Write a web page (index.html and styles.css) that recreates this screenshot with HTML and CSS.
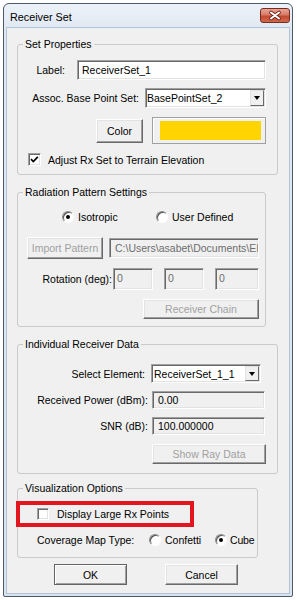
FILE: index.html
```html
<!DOCTYPE html>
<html>
<head>
<meta charset="utf-8">
<title>Receiver Set</title>
<link rel="stylesheet" href="styles.css">
</head>
<body>
<div class="window">
  <div class="titlebar">
    <span class="title">Receiver Set</span>
    <div class="close">
      <svg width="28" height="13" viewBox="0 0 28 13">
        <path d="M10 3.5 L18 9.5 M18 3.5 L10 9.5" stroke="#6b2116" stroke-width="3.6" stroke-linecap="round"/>
        <path d="M10 3.5 L18 9.5 M18 3.5 L10 9.5" stroke="#ffffff" stroke-width="2" stroke-linecap="round"/>
      </svg>
    </div>
  </div>
  <div class="client">
    <fieldset class="group g1">
      <legend>Set Properties</legend>
      <div class="row r1">
        <span class="lbl w47">Label:</span>
        <div class="edit e-label">ReceiverSet_1</div>
      </div>
      <div class="row r2">
        <span class="lbl w121">Assoc. Base Point Set:</span>
        <div class="combo c-base"><span class="val">BasePointSet_2</span><span class="arrow"><i></i></span></div>
      </div>
      <div class="row r3">
        <div class="btn b-color">Color</div>
        <div class="swatch"><span class="fill"></span></div>
      </div>
      <div class="row r4">
        <span class="chk chk-adjust"><svg width="11" height="11" viewBox="0 0 11 11"><path d="M2 5.2 L4.3 7.6 L8.8 2.8" fill="none" stroke="#000" stroke-width="1.7"/></svg></span>
        <span class="chk-text">Adjust Rx Set to Terrain Elevation</span>
      </div>
    </fieldset>

    <fieldset class="group g2">
      <legend>Radiation Pattern Settings</legend>
      <div class="row rr">
        <span class="opt opt-iso"><span class="radio on"><i></i></span><span class="opt-text">Isotropic</span></span>
        <span class="opt"><span class="radio"></span><span class="opt-text">User Defined</span></span>
      </div>
      <div class="row ri">
        <div class="btn disabled b-import">Import Pattern</div>
        <div class="edit disabled e-path">C:\Users\asabet\Documents\EI</div>
      </div>
      <div class="row rrot">
        <span class="lbl w95">Rotation (deg):</span>
        <div class="edit disabled e-rot1">0</div>
        <div class="edit disabled e-rot2">0</div>
        <div class="edit disabled e-rot3">0</div>
      </div>
      <div class="row rc">
        <div class="btn disabled b-chain">Receiver Chain</div>
      </div>
    </fieldset>

    <fieldset class="group g3">
      <legend>Individual Receiver Data</legend>
      <div class="row rs">
        <span class="lbl w127">Select Element:</span>
        <div class="combo c-elem"><span class="val">ReceiverSet_1_1</span><span class="arrow"><i></i></span></div>
      </div>
      <div class="row rp">
        <span class="lbl w130">Received Power (dBm):</span>
        <div class="edit readonly e-val">0.00</div>
      </div>
      <div class="row rp">
        <span class="lbl w130">SNR (dB):</span>
        <div class="edit readonly e-val">100.000000</div>
      </div>
      <div class="row rray">
        <div class="btn disabled b-ray">Show Ray Data</div>
      </div>
    </fieldset>

    <fieldset class="group g4">
      <legend>Visualization Options</legend>
      <div class="row highlight">
        <span class="chk chk-large"></span>
        <span class="chk-text large-text">Display Large Rx Points</span>
      </div>
      <div class="row rcov">
        <span class="cov-lbl">Coverage Map Type:</span>
        <span class="opt opt-conf"><span class="radio"></span><span class="opt-text">Confetti</span></span>
        <span class="opt opt-cube"><span class="radio on"><i></i></span><span class="opt-text">Cube</span></span>
      </div>
    </fieldset>

    <div class="row actions">
      <div class="btn default b-ok">OK</div>
      <div class="btn b-cancel">Cancel</div>
    </div>
  </div>
</div>
</body>
</html>
```

FILE: styles.css
```css
* { box-sizing: border-box; }
html, body { margin: 0; padding: 0; background: #ffffff; }
body {
  font-family: "Liberation Sans", Arial, sans-serif;
  font-size: 10.5px;
  color: #000;
}

.window {
  margin: 3px 0 0 3px;
  width: 290px;
  height: 594px;
  border: 1px solid #4f5866;
  border-radius: 6px 6px 2px 2px;
  background: linear-gradient(#edf2f8, #e0e9f3 24px, #d8e3f0);
  padding: 0 3px 3px 3px;
  display: flex;
  flex-direction: column;
}

.titlebar {
  height: 24px;
  display: flex;
  align-items: flex-start;
}
.title {
  margin-left: 3px;
  line-height: 24px;
  padding-top: 1px;
  font-size: 10.8px;
  color: #000;
}
.close {
  margin-left: auto;
  margin-right: -1px;
  margin-top: 4px;
  width: 30px;
  height: 15px;
  border: 1px solid #7a2a1d;
  border-radius: 3px;
  background: linear-gradient(#e8a696, #d87a66 45%, #c44a30 55%, #cf6a4d);
  display: flex;
  align-items: center;
  justify-content: center;
}
.close svg { display: block; }

.client {
  height: 565px;
  background: #f0f0f0;
  box-shadow: 0 0 0 1px #b3c4d9;
  padding: 10px 0 0 10px;
  display: flex;
  flex-direction: column;
  align-items: flex-start;
}

.group {
  margin: 0;
  padding: 0;
  border: 1px solid #cacaca;
  border-radius: 3px;
  min-inline-size: 0;
}
.group legend {
  margin-left: 5px;
  padding: 0 2px;
  line-height: 13px;
  font-size: 10.5px;
}

.row {
  display: flex;
  align-items: center;
  white-space: nowrap;
}

.lbl { text-align: right; }
.w47 { width: 47px; }
.w121 { width: 121px; }
.w95 { width: 95px; }
.w127 { width: 127px; }
.w130 { width: 130px; }

/* sunken edit */
.edit, .combo {
  background: #fff;
  border: 1px solid;
  border-color: #a0a0a0 #ffffff #ffffff #a0a0a0;
  box-shadow: inset 1px 1px 0 #696969, inset -1px -1px 0 #e3e3e3;
  display: flex;
  align-items: center;
  overflow: hidden;
  white-space: nowrap;
}
.edit { padding-left: 4px; }
.edit.disabled { background: #f0f0f0; color: #6d6d6d; }
.edit.readonly { background: #f0f0f0; color: #000; }

.combo .val { flex: 1; padding-left: 2px; }
.combo .arrow {
  width: 14px;
  height: calc(100% - 2px);
  margin-right: 1px;
  background: #f0f0f0;
  border: 1px solid;
  border-color: #e3e3e3 #696969 #696969 #e3e3e3;
  display: flex;
  align-items: center;
  justify-content: center;
}
.combo .arrow i {
  display: block;
  width: 0;
  height: 0;
  border-top: 4px solid #000;
  border-left: 3.5px solid transparent;
  border-right: 3.5px solid transparent;
}

/* raised button */
.btn {
  background: #f0f0f0;
  border: 1px solid;
  border-color: #ffffff #696969 #696969 #ffffff;
  box-shadow: inset -1px -1px 0 #a0a0a0, inset 1px 1px 0 #e3e3e3;
  display: flex;
  align-items: center;
  justify-content: center;
  white-space: nowrap;
}
.btn.disabled { color: #a0a0a0; }
.btn.default {
  border-color: #646464;
  box-shadow: inset 1px 1px 0 #ffffff, inset -1px -1px 0 #a0a0a0;
}

.chk {
  width: 13px;
  height: 13px;
  background: #fff;
  border: 1px solid;
  border-color: #a0a0a0 #ffffff #ffffff #a0a0a0;
  box-shadow: inset 1px 1px 0 #696969, inset -1px -1px 0 #e3e3e3;
  display: flex;
  align-items: center;
  justify-content: center;
  flex: none;
}
.chk svg { display: block; }

.radio {
  width: 12px;
  height: 12px;
  border-radius: 50%;
  background: #fff;
  border: 1px solid;
  border-color: #8a8a8a #ffffff #ffffff #8a8a8a;
  box-shadow: inset 1px 1px 0 #505050;
  display: flex;
  align-items: center;
  justify-content: center;
  flex: none;
}
.radio i {
  display: block;
  width: 4px;
  height: 4px;
  border-radius: 50%;
  background: #000;
}
.opt { display: flex; align-items: center; }
.opt-text { margin-left: 4px; }

/* group 1 */
.g1 { width: 261px; padding-bottom: 8px; }
.r1 { margin-top: 9px; height: 20px; }
.e-label { margin-left: 12px; width: 189px; height: 20px; }
.r2 { margin-top: 8px; height: 20px; }
.c-base { margin-left: 6px; width: 121px; height: 20px; }
.c-base .val { padding-left: 1px; }
.r3 { margin-top: 9px; height: 27px; }
.b-color { margin-left: 78px; width: 47px; height: 24px; }
.swatch {
  margin-left: 9px;
  width: 114px;
  height: 27px;
  border: 1px solid #a0a0a0;
  box-shadow: inset 1px 1px 0 #ffffff;
  background: #f0f0f0;
  padding: 3px 4px 3px 7px;
  display: flex;
}
.swatch .fill { flex: 1; background: #ffd400; }
.r4 { margin-top: 9px; height: 13px; }
.chk-adjust { margin-left: 10px; }
.chk-text { margin-left: 7px; }

/* group 2 */
.g2 { margin-top: 11px; width: 249px; padding-bottom: 7px; }
.rr { margin-top: 11px; height: 13px; }
.opt-iso { margin-left: 44px; width: 94px; }
.ri { margin-top: 14px; height: 22px; }
.b-import { margin-left: 9px; width: 76px; height: 22px; }
.e-path { margin-left: 6px; width: 150px; height: 20px; padding-left: 5px; }
.rrot { margin-top: 9px; height: 22px; }
.rrot .lbl { padding-right: 1px; }
.e-rot1, .e-rot2, .e-rot3 { height: 22px; padding-left: 3px; align-items: flex-start; padding-top: 3px; }
.e-rot1 { width: 40px; }
.e-rot2 { margin-left: 11px; width: 40px; }
.e-rot3 { margin-left: 11px; width: 44px; }
.rc { margin-top: 9px; height: 20px; }
.b-chain { margin-left: 125px; width: 116px; height: 20px; }

/* group 3 */
.g3 { margin-top: 11px; width: 261px; padding-bottom: 9px; }
.rs { margin-top: 13px; height: 19px; }
.c-elem { margin-left: 6px; width: 110px; height: 19px; }
.rp { margin-top: 8px; height: 18px; }
.e-val { margin-left: 4px; width: 113px; height: 18px; padding-left: 5px; }
.rray { margin-top: 9px; height: 20px; }
.b-ray { margin-left: 134px; width: 114px; height: 20px; }

/* group 4 */
.g4 { margin-top: 8px; width: 241px; padding-bottom: 11px; }
.highlight {
  margin-top: 6px;
  margin-left: -2px;
  width: 178px;
  height: 26px;
  border: 4px solid #e3161f;
  padding-left: 17px;
  position: relative;
}
.chk-large { width: 12px; height: 12px; }
.large-text { margin-left: 8px; }
.rcov { margin-top: 6px; height: 13px; }
.cov-lbl { margin-left: 19px; width: 112px; }
.opt-conf { width: 66px; }
.opt-cube .opt-text { margin-left: 3px; letter-spacing: -0.2px; }

/* dialog buttons */
.actions { margin-top: 6px; height: 21px; }
.b-ok { margin-left: 37px; width: 73px; height: 21px; }
.b-cancel { margin-left: 38px; width: 73px; height: 21px; }
```
